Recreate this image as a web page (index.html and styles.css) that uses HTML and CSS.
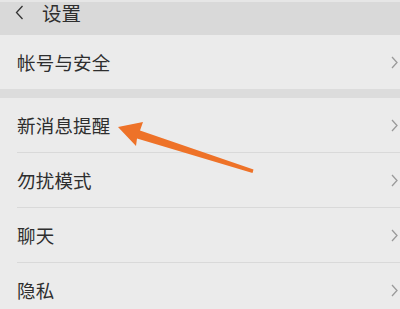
FILE: index.html
```html
<!DOCTYPE html>
<html lang="zh-CN">
<head>
<meta charset="utf-8">
<title>设置</title>
<link rel="stylesheet" href="styles.css">
</head>
<body>
<div class="page">
  <header class="topbar">
    <svg class="back" width="9" height="15" viewBox="0 0 9 15"><path d="M7.5 1 L1.5 7.5 L7.5 14" fill="none" stroke="#333" stroke-width="1.3"/></svg>
    <span class="title">设置</span>
  </header>
  <section class="group first">
    <div class="row"><span class="label">帐号与安全</span><svg class="chev" width="7" height="13" viewBox="0 0 7 13"><path d="M1 1 L6 6.5 L1 12" fill="none" stroke="#9a9a9a" stroke-width="1.3"/></svg></div>
  </section>
  <section class="group">
    <div class="row"><span class="label">新消息提醒</span><svg class="chev" width="7" height="13" viewBox="0 0 7 13"><path d="M1 1 L6 6.5 L1 12" fill="none" stroke="#9a9a9a" stroke-width="1.3"/></svg></div>
    <div class="row"><span class="label">勿扰模式</span><svg class="chev" width="7" height="13" viewBox="0 0 7 13"><path d="M1 1 L6 6.5 L1 12" fill="none" stroke="#9a9a9a" stroke-width="1.3"/></svg></div>
    <div class="row"><span class="label">聊天</span><svg class="chev" width="7" height="13" viewBox="0 0 7 13"><path d="M1 1 L6 6.5 L1 12" fill="none" stroke="#9a9a9a" stroke-width="1.3"/></svg></div>
    <div class="row"><span class="label">隐私</span><svg class="chev" width="7" height="13" viewBox="0 0 7 13"><path d="M1 1 L6 6.5 L1 12" fill="none" stroke="#9a9a9a" stroke-width="1.3"/></svg></div>
  </section>
  <svg class="arrow" width="400" height="309" viewBox="0 0 400 309">
    <polygon fill="#ee7228" points="118,127 143,122 140,130.5 253.5,169.5 252.5,173 137,138.5 136,146"/>
  </svg>
</div>
</body>
</html>
```
FILE: styles.css
```css
html, body {
  margin: 0;
  padding: 0;
}
body {
  width: 400px;
  height: 309px;
  overflow: hidden;
  background: #dcdcdc;
  font-family: "Noto Sans CJK SC", "Noto Sans", sans-serif;
  color: #2e2e2e;
}
.page {
  position: relative;
  width: 400px;
  height: 309px;
  overflow: hidden;
}
.topbar {
  height: 33px;
  padding-top: 2px;
  background: #d9d9d9;
  box-shadow: inset 0 2px 0 #e6e6e6;
  display: flex;
  align-items: flex-start;
  padding-left: 15px;
}
.back {
  margin-top: 3px;
}
.title {
  margin-left: 18px;
  font-size: 19.5px;
  line-height: 21px;
}
.group {
  background: #ebebeb;
}
.group.first {
  margin-bottom: 9px;
}
.row {
  height: 54px;
  margin-left: 17px;
  padding-right: 2px;
  display: flex;
  align-items: center;
  justify-content: space-between;
  border-bottom: 1px solid #d9d9d9;
}
.group.first .row {
  border-bottom: none;
}
.label {
  font-size: 18.5px;
  line-height: 24px;
  letter-spacing: 0.2px;
}
.chev {
  display: block;
}
.arrow {
  position: absolute;
  left: 0;
  top: 0;
}
```
